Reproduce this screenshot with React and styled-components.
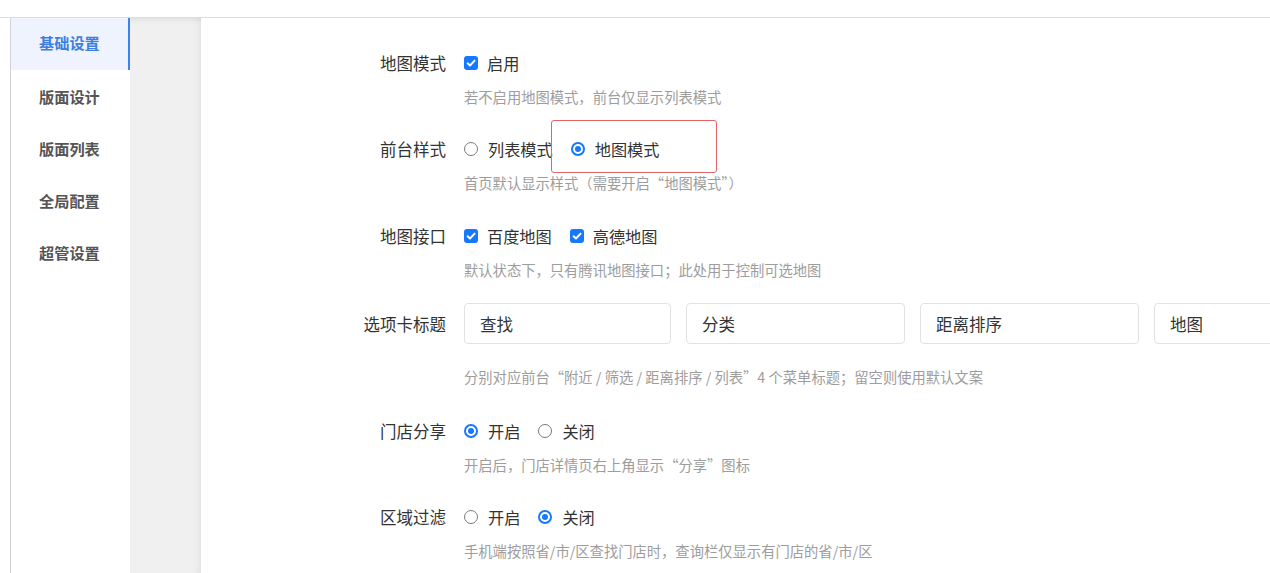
import React from "react";
import styled, { createGlobalStyle } from "styled-components";

const GlobalStyle = createGlobalStyle`
  html, body {
    margin: 0;
    padding: 0;
    width: 100%;
    height: 100%;
    overflow: hidden;
    background: #fff;
  }
  body {
    font-family: "Noto Sans CJK SC", "Noto Sans", "Liberation Sans", sans-serif;
    color: #333;
  }
  * { box-sizing: border-box; }
`;

const Page = styled.div`
  display: flex;
  flex-direction: column;
  height: 573px;
  width: 1270px;
  overflow: hidden;
`;

const TopBar = styled.div`
  flex: none;
  height: 18px;
  border-bottom: 1px solid #dedede;
`;

const Body = styled.div`
  flex: 1;
  display: flex;
  min-height: 0;
`;

const Sidebar = styled.nav`
  flex: none;
  width: 120px;
  margin-left: 10px;
  border-left: 1px solid #d2d2d2;
  background: #fff;
  display: flex;
  flex-direction: column;
`;

const NavItem = styled.div`
  height: 52px;
  display: flex;
  align-items: center;
  padding: 0 0 4px 28px;
  font-size: 15.2px;
  font-weight: 700;
  color: ${(p) => (p.$active ? "#3d7fe0" : "#555")};
  background: ${(p) => (p.$active ? "#eef3fd" : "transparent")};
  border-right: 2px solid ${(p) => (p.$active ? "#3b82ee" : "transparent")};
  margin-bottom: ${(p) => (p.$active ? "2px" : "0")};
`;

const Gutter = styled.div`
  flex: none;
  width: 71px;
  background: #f0f0f0;
  box-shadow: inset 0 6px 6px -6px rgba(0, 0, 0, 0.12),
    inset -10px 0 10px -10px rgba(0, 0, 0, 0.1);
`;

const Main = styled.main`
  flex: 1;
  min-width: 0;
  padding: 29px 0 0 125px;
  overflow: hidden;
`;

const FormItem = styled.div`
  display: grid;
  grid-template-columns: 120px auto;
  column-gap: 18px;
  margin-top: ${(p) => p.$mt}px;
`;

const Label = styled.div`
  height: ${(p) => p.$h || 32}px;
  display: flex;
  align-items: center;
  justify-content: flex-end;
  font-size: 16.5px;
  color: #333;
  white-space: nowrap;
`;

const Field = styled.div`
  display: flex;
  flex-direction: column;
  min-width: 0;
`;

const Controls = styled.div`
  height: 32px;
  display: flex;
  align-items: center;
  gap: 18px;
`;

const Option = styled.label`
  position: relative;
  display: inline-flex;
  align-items: center;
  height: 32px;
  font-size: 16.2px;
  color: #333;
  white-space: nowrap;
`;

const Box = styled.span`
  width: 14px;
  height: 14px;
  border-radius: 3px;
  background: #1677ff;
  display: inline-flex;
  align-items: center;
  justify-content: center;
  margin-right: 9px;
`;

const Dot = styled.span`
  position: relative;
  width: 14px;
  height: 14px;
  border-radius: 50%;
  border: ${(p) => (p.$on ? "2px solid #1677ff" : "1px solid #7a7a7a")};
  margin-right: 10px;
  background: #fff;
  &::after {
    content: "";
    display: ${(p) => (p.$on ? "block" : "none")};
    position: absolute;
    left: 50%;
    top: 50%;
    width: 6px;
    height: 6px;
    margin: -3px 0 0 -3px;
    border-radius: 50%;
    background: #1677ff;
  }
`;

const Highlight = styled.span`
  position: absolute;
  left: -20px;
  top: -13px;
  width: 166px;
  height: 53px;
  border: 1px solid #e36464;
  border-radius: 3px;
  pointer-events: none;
`;

const Hint = styled.div`
  margin-top: ${(p) => p.$mt || 7}px;
  line-height: 22px;
  font-size: 14.3px;
  color: #9d9d9d;
  white-space: nowrap;
`;

const InputRow = styled.div`
  display: flex;
  gap: 15px;
`;

const TextInput = styled.div`
  flex: none;
  width: ${(p) => p.$w}px;
  height: 41px;
  border: 1px solid #e2e2e2;
  border-radius: 4px;
  padding: 0 15px;
  display: flex;
  align-items: center;
  font-size: 16.5px;
  color: #333;
  background: #fff;
`;

const Check = ({ children }) => (
  <Option>
    <Box>
      <svg width="10" height="10" viewBox="0 0 10 10">
        <polyline
          points="1.6,5.2 4,7.5 8.6,2.6"
          fill="none"
          stroke="#fff"
          strokeWidth="1.9"
          strokeLinecap="round"
          strokeLinejoin="round"
        />
      </svg>
    </Box>
    {children}
  </Option>
);

const Radio = ({ on, children, marked }) => (
  <Option>
    {marked && <Highlight />}
    <Dot $on={on} />
    {children}
  </Option>
);

const navItems = ["基础设置", "版面设计", "版面列表", "全局配置", "超管设置"];

export default function App() {
  return (
    <>
      <GlobalStyle />
      <Page>
        <TopBar />
        <Body>
          <Sidebar>
            {navItems.map((t, i) => (
              <NavItem key={t} $active={i === 0}>
                {t}
              </NavItem>
            ))}
          </Sidebar>
          <Gutter />
          <Main>
            <FormItem $mt={0}>
              <Label>地图模式</Label>
              <Field>
                <Controls>
                  <Check>启用</Check>
                </Controls>
                <Hint>若不启用地图模式，前台仅显示列表模式</Hint>
              </Field>
            </FormItem>

            <FormItem $mt={25}>
              <Label>前台样式</Label>
              <Field>
                <Controls>
                  <Radio>列表模式</Radio>
                  <Radio on marked>
                    地图模式
                  </Radio>
                </Controls>
                <Hint>首页默认显示样式（需要开启“地图模式”）</Hint>
              </Field>
            </FormItem>

            <FormItem $mt={26}>
              <Label>地图接口</Label>
              <Field>
                <Controls>
                  <Check>百度地图</Check>
                  <Check>高德地图</Check>
                </Controls>
                <Hint>默认状态下，只有腾讯地图接口；此处用于控制可选地图</Hint>
              </Field>
            </FormItem>

            <FormItem $mt={22}>
              <Label $h={41}>选项卡标题</Label>
              <Field>
                <InputRow>
                  <TextInput $w={207}>查找</TextInput>
                  <TextInput $w={219}>分类</TextInput>
                  <TextInput $w={219}>距离排序</TextInput>
                  <TextInput $w={219}>地图</TextInput>
                </InputRow>
                <Hint $mt={22}>
                  分别对应前台“附近 / 筛选 / 距离排序 / 列表”4 个菜单标题；留空则使用默认文案
                </Hint>
              </Field>
            </FormItem>

            <FormItem $mt={27}>
              <Label>门店分享</Label>
              <Field>
                <Controls>
                  <Radio on>开启</Radio>
                  <Radio>关闭</Radio>
                </Controls>
                <Hint>开启后，门店详情页右上角显示“分享”图标</Hint>
              </Field>
            </FormItem>

            <FormItem $mt={25}>
              <Label>区域过滤</Label>
              <Field>
                <Controls>
                  <Radio>开启</Radio>
                  <Radio on>关闭</Radio>
                </Controls>
                <Hint>手机端按照省/市/区查找门店时，查询栏仅显示有门店的省/市/区</Hint>
              </Field>
            </FormItem>
          </Main>
        </Body>
      </Page>
    </>
  );
}
